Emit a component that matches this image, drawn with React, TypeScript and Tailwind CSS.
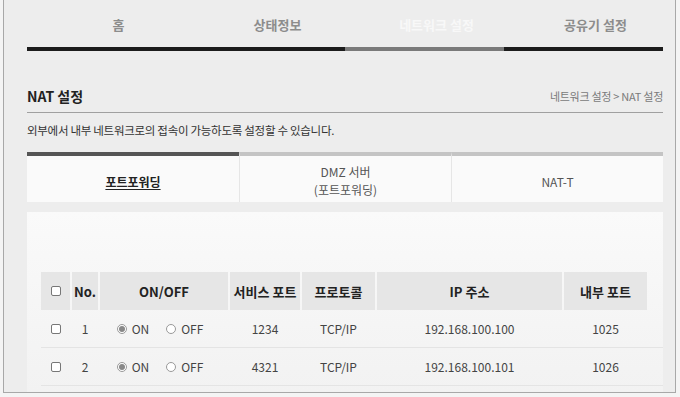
// NAT 설정 — router admin page, port forwarding tab
const font = "font-['Noto_Sans_CJK_KR','Noto_Sans',sans-serif]";

const navItems = [
  { label: '홈', active: false },
  { label: '상태정보', active: false },
  { label: '네트워크 설정', active: true },
  { label: '공유기 설정', active: false },
];

const rows = [
  { no: 1, port: '1234', proto: 'TCP/IP', ip: '192.168.100.100', inner: '1025' },
  { no: 2, port: '4321', proto: 'TCP/IP', ip: '192.168.100.101', inner: '1026' },
];

const cols = 'grid grid-cols-[29px_26px_128px_70px_73px_185px_83px] gap-x-[2px]';

function Checkbox() {
  return <span className="block h-[10px] w-[10px] rounded-[2px] border border-[#777] bg-white" />;
}

function Radio({ checked }: { checked?: boolean }) {
  return (
    <span className="flex h-[10px] w-[10px] items-center justify-center rounded-full border border-[#999] bg-white">
      {checked && <span className="h-[6px] w-[6px] rounded-full bg-[#888]" />}
    </span>
  );
}

export default function App() {
  return (
    <div className={`h-[397px] w-[680px] overflow-hidden bg-[#f4f4f4] pl-[3px] pr-[4px] pb-[4px] ${font}`}>
      <div className="flex h-[393px] flex-col border-x border-b border-[#a8a8a8] bg-[#ededed] pl-[23px] pr-[12px]">
        {/* top navigation */}
        <nav className="grid h-[47px] grid-cols-4">
          {navItems.map((n) => (
            <div
              key={n.label}
              className={`flex items-center justify-center pl-6 pt-[2px] text-[13px] font-bold ${
                n.active ? 'text-[#f8f8f8]' : 'text-[#8c8c8c]'
              }`}
            >
              {n.label}
            </div>
          ))}
        </nav>
        <div className="grid h-[4px] grid-cols-4 bg-[#1c1c1c]">
          <div />
          <div />
          <div className="bg-[#7a7a7a]" />
          <div />
        </div>

        {/* title */}
        <div className="mt-[35px] flex items-end justify-between border-b border-[#a0a0a0] pb-[6px]">
          <h1 className="text-[14px] font-bold leading-[20px] text-[#222]">NAT 설정</h1>
          <span className="pb-[2px] text-[11px] tracking-tight text-[#7a7a7a]">네트워크 설정 &gt; NAT 설정</span>
        </div>
        <p className="mt-[9px] text-[11.5px] tracking-tight text-[#333]">
          외부에서 내부 네트워크로의 접속이 가능하도록 설정할 수 있습니다.
        </p>

        {/* sub tabs */}
        <div className="mt-[13px] grid h-[50px] grid-cols-3">
          <div className="flex items-center justify-center border-t-[4px] border-[#555] bg-[#fafafa] pt-[5px] text-[12px] font-bold text-[#222]">
            <span className="underline underline-offset-2">포트포워딩</span>
          </div>
          <div className="flex flex-col items-center justify-center border-t-[4px] border-l border-[#c4c4c4] border-l-[#e6e6e6] bg-[#fafafa] pt-[3px] text-[12px] leading-[18px] text-[#555]">
            <span>DMZ 서버</span>
            <span>(포트포워딩)</span>
          </div>
          <div className="flex items-center justify-center border-t-[4px] border-l border-[#c4c4c4] border-l-[#e6e6e6] bg-[#fafafa] pt-[5px] text-[12px] text-[#555]">
            NAT-T
          </div>
        </div>

        {/* table panel */}
        <div className="mt-[10px] flex-1 bg-gradient-to-b from-[#fafafa] to-[#f2f2f2] pl-[14px] pt-[60px]">
          <div className={`${cols} h-[38px] text-[13px] font-bold text-[#222]`}>
            <div className="flex items-center justify-center bg-[#e6e6e6]">
              <Checkbox />
            </div>
            <div className="flex items-center justify-center bg-[#e6e6e6]">No.</div>
            <div className="flex items-center justify-center bg-[#e6e6e6]">ON/OFF</div>
            <div className="flex items-center justify-center bg-[#e6e6e6]">서비스 포트</div>
            <div className="flex items-center justify-center bg-[#e6e6e6]">프로토콜</div>
            <div className="flex items-center justify-center bg-[#e6e6e6]">IP 주소</div>
            <div className="flex items-center justify-center bg-[#e6e6e6]">내부 포트</div>
          </div>
          {rows.map((r) => (
            <div key={r.no} className={`${cols} h-[38px] border-b border-[#e4e4e4] text-[12px] text-[#444]`}>
              <div className="flex items-center justify-center">
                <Checkbox />
              </div>
              <div className="flex items-center justify-center">{r.no}</div>
              <div className="flex items-center justify-center gap-[5px] pr-[8px]">
                <Radio checked />
                <span className="mr-[12px]">ON</span>
                <Radio />
                <span>OFF</span>
              </div>
              <div className="flex items-center justify-center">{r.port}</div>
              <div className="flex items-center justify-center">{r.proto}</div>
              <div className="flex items-center justify-center">{r.ip}</div>
              <div className="flex items-center justify-center">{r.inner}</div>
            </div>
          ))}
        </div>
      </div>
    </div>
  );
}
